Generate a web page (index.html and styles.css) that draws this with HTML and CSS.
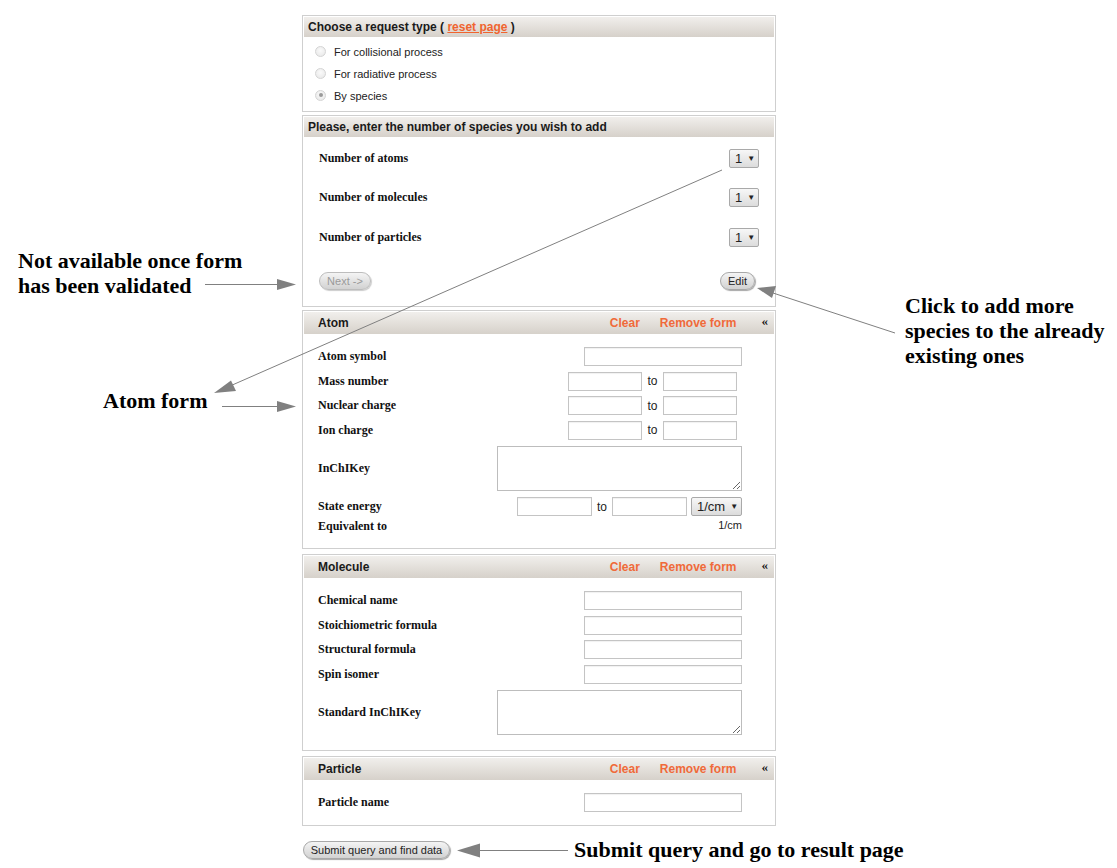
FILE: index.html
```html
<!DOCTYPE html>
<html>
<head>
<meta charset="utf-8">
<link rel="stylesheet" href="styles.css">
</head>
<body>
<div class="page">
  <div class="form">
    <div class="panel p-type">
      <div class="head">Choose a request type ( <a class="reset">reset page</a> )</div>
      <div class="radios">
        <label class="radio"><span class="dot"></span>For collisional process</label>
        <label class="radio"><span class="dot"></span>For radiative process</label>
        <label class="radio"><span class="dot on"></span>By species</label>
      </div>
    </div>

    <div class="panel p-count">
      <div class="head">Please, enter the number of species you wish to add</div>
      <div class="count-body">
        <div class="count-row"><span class="lbl">Number of atoms</span><span class="sel">1 <i>&#9660;</i></span></div>
        <div class="count-row"><span class="lbl">Number of molecules</span><span class="sel">1 <i>&#9660;</i></span></div>
        <div class="count-row"><span class="lbl">Number of particles</span><span class="sel">1 <i>&#9660;</i></span></div>
        <div class="btn-row"><span class="btn btn-next">Next -&gt;</span><span class="btn btn-edit">Edit</span></div>
      </div>
    </div>

    <div class="panel p-atom">
      <div class="head2"><span class="title">Atom</span><a class="act">Clear</a><a class="act act-rm">Remove form</a><span class="fold">&laquo;</span></div>
      <div class="body">
        <div class="row"><span class="lbl">Atom symbol</span><span class="inp wide"></span></div>
        <div class="row"><span class="lbl">Mass number</span><span class="pair"><span class="inp half"></span><span class="to">to</span><span class="inp half"></span></span></div>
        <div class="row"><span class="lbl">Nuclear charge</span><span class="pair"><span class="inp half"></span><span class="to">to</span><span class="inp half"></span></span></div>
        <div class="row"><span class="lbl">Ion charge</span><span class="pair"><span class="inp half"></span><span class="to">to</span><span class="inp half"></span></span></div>
        <div class="row row-ta"><span class="lbl">InChIKey</span><textarea class="ta"></textarea></div>
        <div class="row"><span class="lbl">State energy</span><span class="energy"><span class="inp en"></span><span class="to to2">to</span><span class="inp en"></span><span class="sel unit">1/cm <i>&#9660;</i></span></span></div>
        <div class="row row-eq"><span class="lbl">Equivalent to</span><span class="eq">1/cm</span></div>
      </div>
    </div>

    <div class="panel p-mol">
      <div class="head2"><span class="title">Molecule</span><a class="act">Clear</a><a class="act act-rm">Remove form</a><span class="fold">&laquo;</span></div>
      <div class="body">
        <div class="row"><span class="lbl">Chemical name</span><span class="inp wide"></span></div>
        <div class="row"><span class="lbl">Stoichiometric formula</span><span class="inp wide"></span></div>
        <div class="row"><span class="lbl">Structural formula</span><span class="inp wide"></span></div>
        <div class="row"><span class="lbl">Spin isomer</span><span class="inp wide"></span></div>
        <div class="row row-ta"><span class="lbl">Standard InChIKey</span><textarea class="ta"></textarea></div>
      </div>
    </div>

    <div class="panel p-part">
      <div class="head2"><span class="title">Particle</span><a class="act">Clear</a><a class="act act-rm">Remove form</a><span class="fold">&laquo;</span></div>
      <div class="body">
        <div class="row"><span class="lbl">Particle name</span><span class="inp wide"></span></div>
      </div>
    </div>

    <div class="submit-row"><span class="btn btn-submit">Submit query and find data</span></div>
  </div>

  <svg class="arrows" width="1117" height="868" viewBox="0 0 1117 868">
    <g stroke="#808080" stroke-width="1" fill="none">
      <line x1="205" y1="284.5" x2="280" y2="284.5"/>
      <line x1="222" y1="406.5" x2="280" y2="406.5"/>
      <line x1="722" y1="170" x2="230" y2="386"/>
      <line x1="895" y1="333" x2="773" y2="293"/>
      <line x1="568" y1="850.5" x2="478" y2="850.5"/>
    </g>
    <g fill="#808080">
      <polygon points="296,284.5 277,279 277,290"/>
      <polygon points="296,406.5 277,401 277,412"/>
      <polygon points="214,393 231,380.5 236,391"/>
      <polygon points="757,288 776,286 772,298"/>
      <polygon points="457,850.5 480,843.5 480,857.5"/>
    </g>
  </svg>

  <div class="note note-next">Not available once form<br>has been validated</div>
  <div class="note note-atom">Atom form</div>
  <div class="note note-edit">Click to add more<br>species to the already<br>existing ones</div>
  <div class="note note-submit">Submit query and go to result page</div>
</div>
</body>
</html>
```

FILE: styles.css
```css
html, body {
  margin: 0;
  padding: 0;
  background: #fff;
}

.page {
  position: relative;
  width: 1117px;
  height: 868px;
  font-family: "Liberation Sans", Arial, sans-serif;
  font-size: 11px;
  color: #222;
}

.form {
  margin-left: 302px;
  padding-top: 15px;
  width: 474px;
  display: flex;
  flex-direction: column;
}

.panel {
  border: 1px solid #cfcfcf;
  padding: 1px;
  background: #fff;
  box-sizing: border-box;
}

.p-type { height: 97px; }
.p-count { margin-top: 3px; height: 192px; }
.p-atom { margin-top: 3px; height: 239px; }
.p-mol { margin-top: 5px; height: 197px; }
.p-part { margin-top: 5px; height: 70px; }

.head {
  height: 20px;
  line-height: 20px;
  padding-left: 4px;
  font-weight: bold;
  font-size: 12px;
  color: #1a1a1a;
  background: linear-gradient(#f1efec, #d6d1ca);
}

.reset {
  color: #f0642f;
  text-decoration: underline;
}

.radios {
  padding: 4px 0 0 11px;
  display: flex;
  flex-direction: column;
}

.radio {
  height: 22px;
  display: flex;
  align-items: center;
  color: #222;
}

.dot {
  width: 11px;
  height: 11px;
  border-radius: 50%;
  border: 1px solid #d4d4d4;
  background: radial-gradient(circle at 50% 40%, #fafafa, #e6e6e6);
  box-sizing: border-box;
  margin-right: 8px;
  margin-top: -2px;
  position: relative;
}

.dot.on::after {
  content: "";
  position: absolute;
  left: 2.5px;
  top: 2.5px;
  width: 4px;
  height: 4px;
  border-radius: 50%;
  background: #9a9a9a;
}

.lbl {
  font-family: "Liberation Serif", "Times New Roman", serif;
  font-weight: bold;
  font-size: 12px;
  color: #111;
}

.count-body {
  padding: 11.5px 15px 0 15px;
  display: flex;
  flex-direction: column;
}

.count-row {
  height: 19px;
  display: flex;
  align-items: center;
  justify-content: space-between;
  margin-bottom: 20.5px;
}

.sel {
  height: 19px;
  box-sizing: border-box;
  border: 1px solid #a9a9a9;
  border-radius: 2px;
  background: linear-gradient(#f7f7f7, #dcdcdc);
  display: inline-flex;
  align-items: center;
  padding: 0 4px 0 5px;
  font-size: 13px;
  color: #222;
  width: 30px;
}

.sel i {
  font-style: normal;
  font-size: 8px;
  margin-left: 5px;
}

.btn-row {
  display: flex;
  justify-content: space-between;
  margin-top: 5px;
  padding-right: 4px;
}

.btn {
  display: inline-flex;
  align-items: center;
  justify-content: center;
  height: 18px;
  box-sizing: border-box;
  border: 1px solid #a8a8a8;
  border-radius: 9px;
  background: linear-gradient(#f4f4f4, #d2d2d2);
  box-shadow: 1px 1px 1px rgba(0, 0, 0, 0.35);
  font-size: 11px;
  color: #222;
}

.btn-next { width: 52px; color: #9a9a9a; border-color: #bdbdbd; box-shadow: 1px 1px 1px rgba(0, 0, 0, 0.2); }
.btn-edit { width: 35px; }

.head2 {
  height: 22px;
  display: flex;
  align-items: center;
  padding: 0 6px 0 14px;
  font-weight: bold;
  font-size: 12px;
  background: linear-gradient(#f1efec, #d6d1ca);
}

.head2 .title {
  flex: 1;
  color: #1a1a1a;
}

.act {
  color: #f06a3a;
}

.act-rm {
  margin-left: 20px;
}

.fold {
  margin-left: 25px;
  font-family: "Liberation Serif", serif;
  font-size: 13px;
  color: #111;
  margin-top: -4px;
}

.body {
  padding: 10.5px 32px 0 14px;
  display: flex;
  flex-direction: column;
}

.row {
  height: 24.5px;
  display: flex;
  align-items: center;
  justify-content: space-between;
}

.inp {
  display: inline-block;
  height: 19px;
  box-sizing: border-box;
  border: 1px solid #c4c4c4;
  box-shadow: inset 0 1px 1px rgba(0, 0, 0, 0.06);
  background: #fff;
}

.inp.wide { width: 158px; }
.inp.half { width: 74px; }
.inp.en { width: 75px; }

.pair {
  display: flex;
  align-items: center;
  margin-right: 5px;
}

.to {
  width: 21px;
  text-align: center;
  font-size: 12px;
  color: #222;
}

.to.to2 { width: 20px; }

.energy {
  display: flex;
  align-items: center;
}

.sel.unit {
  width: 51px;
  margin-left: 4px;
  font-size: 13px;
  padding-left: 5px;
}

.sel.unit i { margin-left: 5px; }

.row-ta {
  height: 52px;
}

.ta {
  width: 245px;
  height: 45px;
  box-sizing: border-box;
  border: 1px solid #bdbdbd;
  margin: 0;
  padding: 0;
  resize: both;
  font: inherit;
}

.row-eq {
  height: 16px;
  align-items: flex-start;
}

.eq {
  font-size: 11px;
  color: #222;
}

.submit-row {
  margin-top: 15px;
  padding-left: 1px;
}

.btn-submit {
  width: 147px;
}

.arrows {
  position: absolute;
  left: 0;
  top: 0;
  pointer-events: none;
}

.note {
  position: absolute;
  font-family: "Liberation Serif", "Times New Roman", serif;
  font-weight: bold;
  font-size: 22px;
  line-height: 25px;
  color: #000;
  white-space: nowrap;
}

.note-next { left: 18px; top: 248px; }
.note-atom { left: 103px; top: 388px; }
.note-edit { left: 905px; top: 293px; }
.note-submit { left: 574px; top: 837px; }
```
